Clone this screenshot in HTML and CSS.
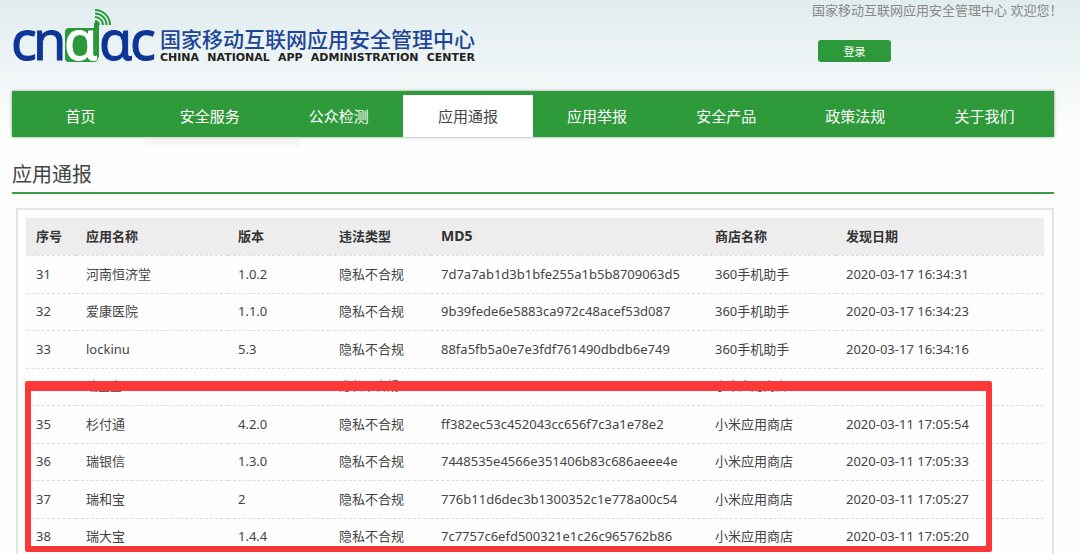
FILE: index.html
```html
<!DOCTYPE html>
<html lang="zh-CN">
<head>
<meta charset="utf-8">
<meta name="viewport" content="width=device-width, initial-scale=1">
<title>国家移动互联网应用安全管理中心</title>
<link rel="stylesheet" href="styles.css">
</head>
<body>
<div class="page">
  <header class="header">
    <a class="brand" href="#">
      <svg class="brand-mark" width="142" height="58" viewBox="0 0 142 58" role="img" aria-label="cnaac">
        <rect x="51" y="19" width="33" height="34" rx="4" fill="#2b9939"/>
        <rect x="80" y="13" width="5" height="36" rx="2" fill="#2b9939"/>
        <g fill="none" stroke="#2b9939" stroke-width="2">
          <path d="M81 12a4 4 0 0 1 4 4"/>
          <path d="M81 8a8 8 0 0 1 8 8"/>
          <path d="M81 4.500a11.500 11.500 0 0 1 11.500 11.500"/>
          <path d="M81 1a15 15 0 0 1 15 15"/>
        </g>
        <text class="mark-text" y="51" x="-3 19">cn</text>
        <text class="mark-text mark-text-light" x="50" y="51">ɑ</text>
        <text class="mark-text" y="51" x="85 116">ɑc</text>
      </svg>
      <span class="brand-text">
        <span class="brand-cn">国家移动互联网应用安全管理中心</span>
        <span class="brand-en">CHINA NATIONAL APP ADMINISTRATION CENTER</span>
      </span>
    </a>
    <div class="account">
      <p class="welcome">国家移动互联网应用安全管理中心 欢迎您！</p>
      <button class="login" type="button">登录</button>
    </div>
  </header>

  <nav class="nav">
    <a class="nav-item" href="#">首页</a>
    <a class="nav-item nav-item-open" href="#">安全服务</a>
    <a class="nav-item" href="#">公众检测</a>
    <a class="nav-item nav-item-active" href="#" aria-current="page">应用通报</a>
    <a class="nav-item" href="#">应用举报</a>
    <a class="nav-item" href="#">安全产品</a>
    <a class="nav-item" href="#">政策法规</a>
    <a class="nav-item" href="#">关于我们</a>
  </nav>

  <main>
    <h1 class="title">应用通报</h1>
    <section class="panel">
      <table class="apps">
        <colgroup>
          <col class="col-no"><col class="col-name"><col class="col-version"><col class="col-type"><col class="col-md5"><col class="col-store"><col class="col-date">
        </colgroup>
        <thead>
          <tr><th>序号</th><th>应用名称</th><th>版本</th><th>违法类型</th><th class="latin">MD5</th><th>商店名称</th><th>发现日期</th></tr>
        </thead>
        <tbody>
          <tr><td>31</td><td>河南恒济堂</td><td>1.0.2</td><td>隐私不合规</td><td>7d7a7ab1d3b1bfe255a1b5b8709063d5</td><td>360手机助手</td><td>2020-03-17 16:34:31</td></tr>
          <tr><td>32</td><td>爱康医院</td><td>1.1.0</td><td>隐私不合规</td><td>9b39fede6e5883ca972c48acef53d087</td><td>360手机助手</td><td>2020-03-17 16:34:23</td></tr>
          <tr><td>33</td><td>lockinu</td><td>5.3</td><td>隐私不合规</td><td>88fa5fb5a0e7e3fdf761490dbdb6e749</td><td>360手机助手</td><td>2020-03-17 16:34:16</td></tr>
          <tr class="covered"><td></td><td>瑞盈宝</td><td></td><td>隐私不合规</td><td></td><td>小米应用商店</td><td></td></tr>
          <tr><td>35</td><td>杉付通</td><td>4.2.0</td><td>隐私不合规</td><td>ff382ec53c452043cc656f7c3a1e78e2</td><td>小米应用商店</td><td>2020-03-11 17:05:54</td></tr>
          <tr><td>36</td><td>瑞银信</td><td>1.3.0</td><td>隐私不合规</td><td>7448535e4566e351406b83c686aeee4e</td><td>小米应用商店</td><td>2020-03-11 17:05:33</td></tr>
          <tr><td>37</td><td>瑞和宝</td><td>2</td><td>隐私不合规</td><td>776b11d6dec3b1300352c1e778a00c54</td><td>小米应用商店</td><td>2020-03-11 17:05:27</td></tr>
          <tr><td>38</td><td>瑞大宝</td><td>1.4.4</td><td>隐私不合规</td><td>7c7757c6efd500321e1c26c965762b86</td><td>小米应用商店</td><td>2020-03-11 17:05:20</td></tr>
        </tbody>
      </table>
      <div class="highlight" aria-hidden="true"></div>
    </section>
  </main>
</div>
</body>
</html>
```
FILE: styles.css
```css
* { box-sizing: border-box; }

body {
  margin: 0;
  background: #fefefe linear-gradient(#e0ecee, #fefefe 136px) no-repeat;
  color: #444;
  font: 13px/20px "Noto Sans", "Noto Sans CJK SC", sans-serif;
}

.page { padding: 0 26px 0 12px; }

.header {
  display: flex;
  justify-content: space-between;
  height: 91px;
}

.brand {
  display: flex;
  gap: 4px;
  padding: 9px 0 0 2px;
  text-decoration: none;
  white-space: nowrap;
}

.brand-mark { flex: none; overflow: visible; }

.mark-text {
  fill: #0c3596;
  stroke: #0c3596;
  font: 54px "Noto Sans", sans-serif;
}

.mark-text-light { fill: #fff; stroke: #fff; }

.brand-text {
  display: flex;
  flex-direction: column;
  gap: 2px;
  padding-top: 17px;
}

.brand-cn {
  color: #1e4596;
  font: 500 21px/24px "Noto Sans CJK SC", sans-serif;
}

.brand-en {
  color: #222;
  font: bold 11px/12px "DejaVu Sans", sans-serif;
  white-space: normal;
  text-align-last: justify;
}

.account { width: 242px; white-space: nowrap; }

.welcome {
  margin: 0 0 20px;
  color: #888;
}

.login {
  display: block;
  width: 73px;
  height: 22px;
  margin-left: 6px;
  padding: 0;
  border: 0;
  border-radius: 3px;
  background: #2c9a3a;
  color: #fff;
  font: 11px/20px "Noto Sans CJK SC", sans-serif;
}

.nav {
  display: flex;
  height: 46px;
  padding: 4px 5px 0 4px;
  background: #2e9a3a;
  box-shadow: 0 0 3px #8a9a8c;
}

.nav-item {
  position: relative;
  flex: 1;
  color: #fff;
  font: 15px/42px "Noto Sans CJK SC", sans-serif;
  text-align: center;
  text-decoration: none;
}

.nav-item-active { background: #fff; color: #444; }

.nav-item-open::after {
  content: "";
  position: absolute;
  top: 100%;
  left: 0;
  width: 154px;
  height: 10px;
  background: linear-gradient(#dcdcdc, #f5f5f5 3px, #f9f9f9);
}

.title {
  margin: 0;
  padding: 21px 0 2px;
  border-bottom: 2px solid #37a043;
  color: #444;
  font: 20px/32px "Noto Sans CJK SC", sans-serif;
}

.panel {
  position: relative;
  margin: 14px 0 0 4px;
  padding: 8px;
  border: 2px solid #e4e4e4;
}

.apps {
  width: 100%;
  border-collapse: collapse;
  table-layout: fixed;
}

.col-no { width: 50px; }
.col-name { width: 152px; }
.col-version { width: 101px; }
.col-type { width: 102px; }
.col-md5 { width: 274px; }
.col-store { width: 131px; }

.apps th,
.apps td {
  height: 38px;
  padding: 0 0 0 10px;
  border-bottom: 1px dashed #ddd;
  text-align: left;
  white-space: nowrap;
}

.apps th { height: 37px; background: #ededed; color: #333; }
.apps .latin { font-size: 14px; }
.apps tbody tr:nth-child(even) td { height: 37px; padding-bottom: 2px; }
.apps tbody tr.covered td { padding-bottom: 0; font-size: 12px; }

.highlight {
  position: absolute;
  top: 171px;
  left: 7px;
  width: 967px;
  height: 171px;
  border: 6px solid #fc3838;
  border-top-width: 10px;
  border-radius: 2px;
}
```
